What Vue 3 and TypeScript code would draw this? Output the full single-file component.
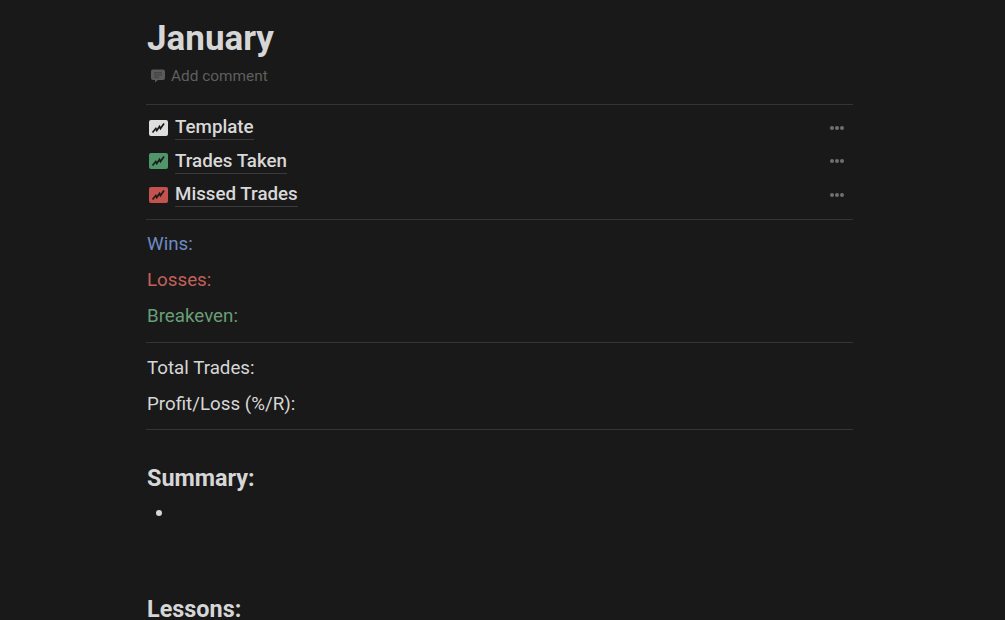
<script setup lang="ts">
const pages = [
  { name: 'Template', color: '#dedede' },
  { name: 'Trades Taken', color: '#4f9768' },
  { name: 'Missed Trades', color: '#c4524d' },
]
</script>

<template>
  <main class="page">
    <h1 class="title">January</h1>
    <div class="comment">
      <svg class="comment-icon" width="16" height="16" viewBox="0 0 16 16">
        <path d="M3 1.500h10a2 2 0 0 1 2 2v6.500a2 2 0 0 1-2 2H8l-3 2.600V12H3a2 2 0 0 1-2-2V3.500a2 2 0 0 1 2-2z" fill="#5a5a5a" />
        <path d="M4 4.800h8M4 7h8M4 9.200h5" stroke="#3a3a3a" stroke-width="0.9" />
      </svg>
      <span>Add comment</span>
    </div>
    <hr class="rule rule-a" />
    <section class="links">
      <div v-for="p in pages" :key="p.name" class="link">
        <svg class="icon" width="19" height="16" viewBox="0 0 19 16">
          <rect x="0" y="0" width="19" height="16" rx="2" :fill="p.color" />
          <path d="M3.500 12.500 L6.800 8.500 L7.800 10.500 L10.500 6.500 L11.500 8.500 L15 3.500" fill="none" stroke="#1b1b1b" stroke-width="1.700" />
        </svg>
        <span class="link-text">{{ p.name }}</span>
        <span class="dots"><i></i><i></i><i></i></span>
      </div>
    </section>
    <hr class="rule rule-b" />
    <p class="line blue">Wins:</p>
    <p class="line red">Losses:</p>
    <p class="line green">Breakeven:</p>
    <hr class="rule rule-c" />
    <p class="line">Total Trades:</p>
    <p class="line">Profit/Loss (%/R):</p>
    <hr class="rule rule-d" />
    <h2 class="heading">Summary:</h2>
    <ul class="list"><li></li></ul>
    <h2 class="heading lessons">Lessons:</h2>
  </main>
</template>

<style>
html, body { margin: 0; background: #191919; overflow: hidden; }
</style>

<style scoped>
.page {
  box-sizing: border-box;
  width: 1005px;
  height: 620px;
  overflow: hidden;
  padding: 0 152px 0 146px;
  background: #191919;
  color: #d4d4d4;
  font-family: Roboto, "Liberation Sans", sans-serif;
}
.title {
  margin: 0 0 0 1px;
  padding-top: 16px;
  font-size: 35px;
  line-height: 45px;
  font-weight: 700;
  color: #d6d6d6;
}
.comment {
  display: flex;
  align-items: center;
  gap: 5px;
  height: 20px;
  margin-top: 5px;
  padding-left: 4px;
  font-size: 15.400px;
  color: #5f5f5f;
}
.rule {
  margin: 0;
  border: 0;
  height: 1px;
  background: #343434;
}
.rule-a { margin-top: 18px; }
.links { padding-top: 6.200px; }
.link {
  display: flex;
  align-items: center;
  height: 33.500px;
  padding-left: 3px;
}
.icon { margin-right: 7px; }
.link-text {
  font-size: 18.750px;
  font-weight: 500;
  color: #d8d8d8;
  line-height: 24px;
  border-bottom: 1px solid #3a3a3a;
}
.dots {
  display: flex;
  gap: 1px;
  margin-left: auto;
  margin-right: 9px;
}
.dots i {
  width: 4px;
  height: 4px;
  border-radius: 50%;
  background: #6f6f6f;
}
.rule-b { margin-top: 7.300px; }
.line {
  margin: 0 0 0 1px;
  height: 36px;
  font-size: 18.750px;
  line-height: 36px;
  color: #d6d6d6;
}
.rule-b + .line { margin-top: 6px; }
.blue { color: #6f8ac0; }
.red { color: #c4605a; }
.green { color: #689e78; }
.rule-c { margin-top: 8px; }
.rule-c + .line { margin-top: 7px; }
.rule-d { margin-top: 7px; }
.heading {
  margin: 32px 0 0 1px;
  font-size: 23.400px;
  line-height: 32px;
  font-weight: 700;
  color: #d6d6d6;
}
.list {
  box-sizing: border-box;
  margin: 0;
  padding: 16px 0 0 1px;
  list-style: none;
  height: 30px;
}
.list li {
  width: 6px;
  height: 6px;
  margin: 0 0 0 9px;
  border-radius: 50%;
  background: #d6d6d6;
}
.lessons { margin-top: 69px; }
</style>
